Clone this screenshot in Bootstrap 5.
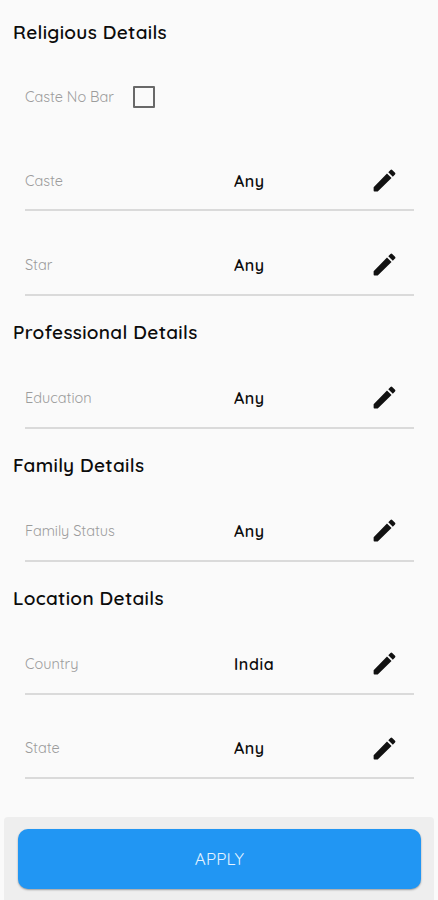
<!DOCTYPE html>
<html lang="en">
<head>
<meta charset="utf-8">
<meta name="viewport" content="width=device-width, initial-scale=1">
<title>Partner Preferences</title>
<link href="https://cdn.jsdelivr.net/npm/bootstrap@5.3.0/dist/css/bootstrap.min.css" rel="stylesheet">
<style>
body { background: #fafafa; font-family: Quicksand, Lato, sans-serif; color: #0c0c0c; height: 900px; overflow: hidden; }
.screen { height: 900px; }
.section-title { height: 48.7px; padding: 0 0 1.3px 13px; font-size: 19px; line-height: 22px; font-weight: 600; letter-spacing: .3px; margin: 0; }
.section-first { height: 42.7px; padding-bottom: 0; }
.field { height: 84.3px; margin: 0 24px 0 25px; padding-top: 25px; border-bottom: 2px solid #dadada; }
.field-plain { border-color: transparent; padding-top: 27px; }
.field-label { width: 209px; font-size: 14.5px; font-weight: 400; color: #9c9c9c; letter-spacing: -.03px; }
.field-value { font-size: 16px; font-weight: 600; letter-spacing: .6px; }
.edit-icon { width: 29px; height: 29px; margin-right: 15px; fill: #111; }
.tick, .tick:checked { appearance: none; width: 22px; height: 22px; border: 2px solid #686868; border-radius: 1px; margin-left: 19px; }
.apply-bar { margin: 0 4px; height: 83px; padding: 12px 13px 0 14px; background: #eeeeee; border-radius: 4px 4px 0 0; }
.apply-btn, .apply-btn:hover { height: 60px; background: #2196f3; color: #e4f3ff; border: 0; border-radius: 10px; font-size: 17px; letter-spacing: .1px; box-shadow: 0 1px 2px rgba(0,0,0,.35); }
</style>
</head>
<body>
<svg class="d-none" xmlns="http://www.w3.org/2000/svg"><symbol id="pencil" viewBox="0 0 24 24"><path d="M3 17.6V20.3q0 .7.7.7H6.4L17.81 9.94l-3.75-3.75L3 17.6zM20.71 7.04a1 1 0 0 0 0-1.41l-2.34-2.34a1 1 0 0 0-1.41 0l-1.83 1.83 3.75 3.75 1.83-1.83z"/></symbol></svg>
<main class="screen d-flex flex-column">
  <h2 class="section-title section-first d-flex align-items-end">Religious Details</h2>
  <div class="field field-plain d-flex align-items-center"><label class="field-label w-auto" for="bar">Caste No Bar</label><input id="bar" type="checkbox" class="tick"></div>
  <div class="field d-flex align-items-center"><span class="field-label">Caste</span><span class="field-value">Any</span><svg class="edit-icon ms-auto"><use href="#pencil"/></svg></div>
  <div class="field d-flex align-items-center"><span class="field-label">Star</span><span class="field-value">Any</span><svg class="edit-icon ms-auto"><use href="#pencil"/></svg></div>
  <h2 class="section-title d-flex align-items-end">Professional Details</h2>
  <div class="field d-flex align-items-center"><span class="field-label">Education</span><span class="field-value">Any</span><svg class="edit-icon ms-auto"><use href="#pencil"/></svg></div>
  <h2 class="section-title d-flex align-items-end">Family Details</h2>
  <div class="field d-flex align-items-center"><span class="field-label">Family Status</span><span class="field-value">Any</span><svg class="edit-icon ms-auto"><use href="#pencil"/></svg></div>
  <h2 class="section-title d-flex align-items-end">Location Details</h2>
  <div class="field d-flex align-items-center"><span class="field-label">Country</span><span class="field-value">India</span><svg class="edit-icon ms-auto"><use href="#pencil"/></svg></div>
  <div class="field d-flex align-items-center"><span class="field-label">State</span><span class="field-value">Any</span><svg class="edit-icon ms-auto"><use href="#pencil"/></svg></div>
  <div class="apply-bar mt-auto"><button type="button" class="btn apply-btn w-100">APPLY</button></div>
</main>
<script src="https://cdn.jsdelivr.net/npm/bootstrap@5.3.0/dist/js/bootstrap.bundle.min.js"></script>
</body>
</html>
